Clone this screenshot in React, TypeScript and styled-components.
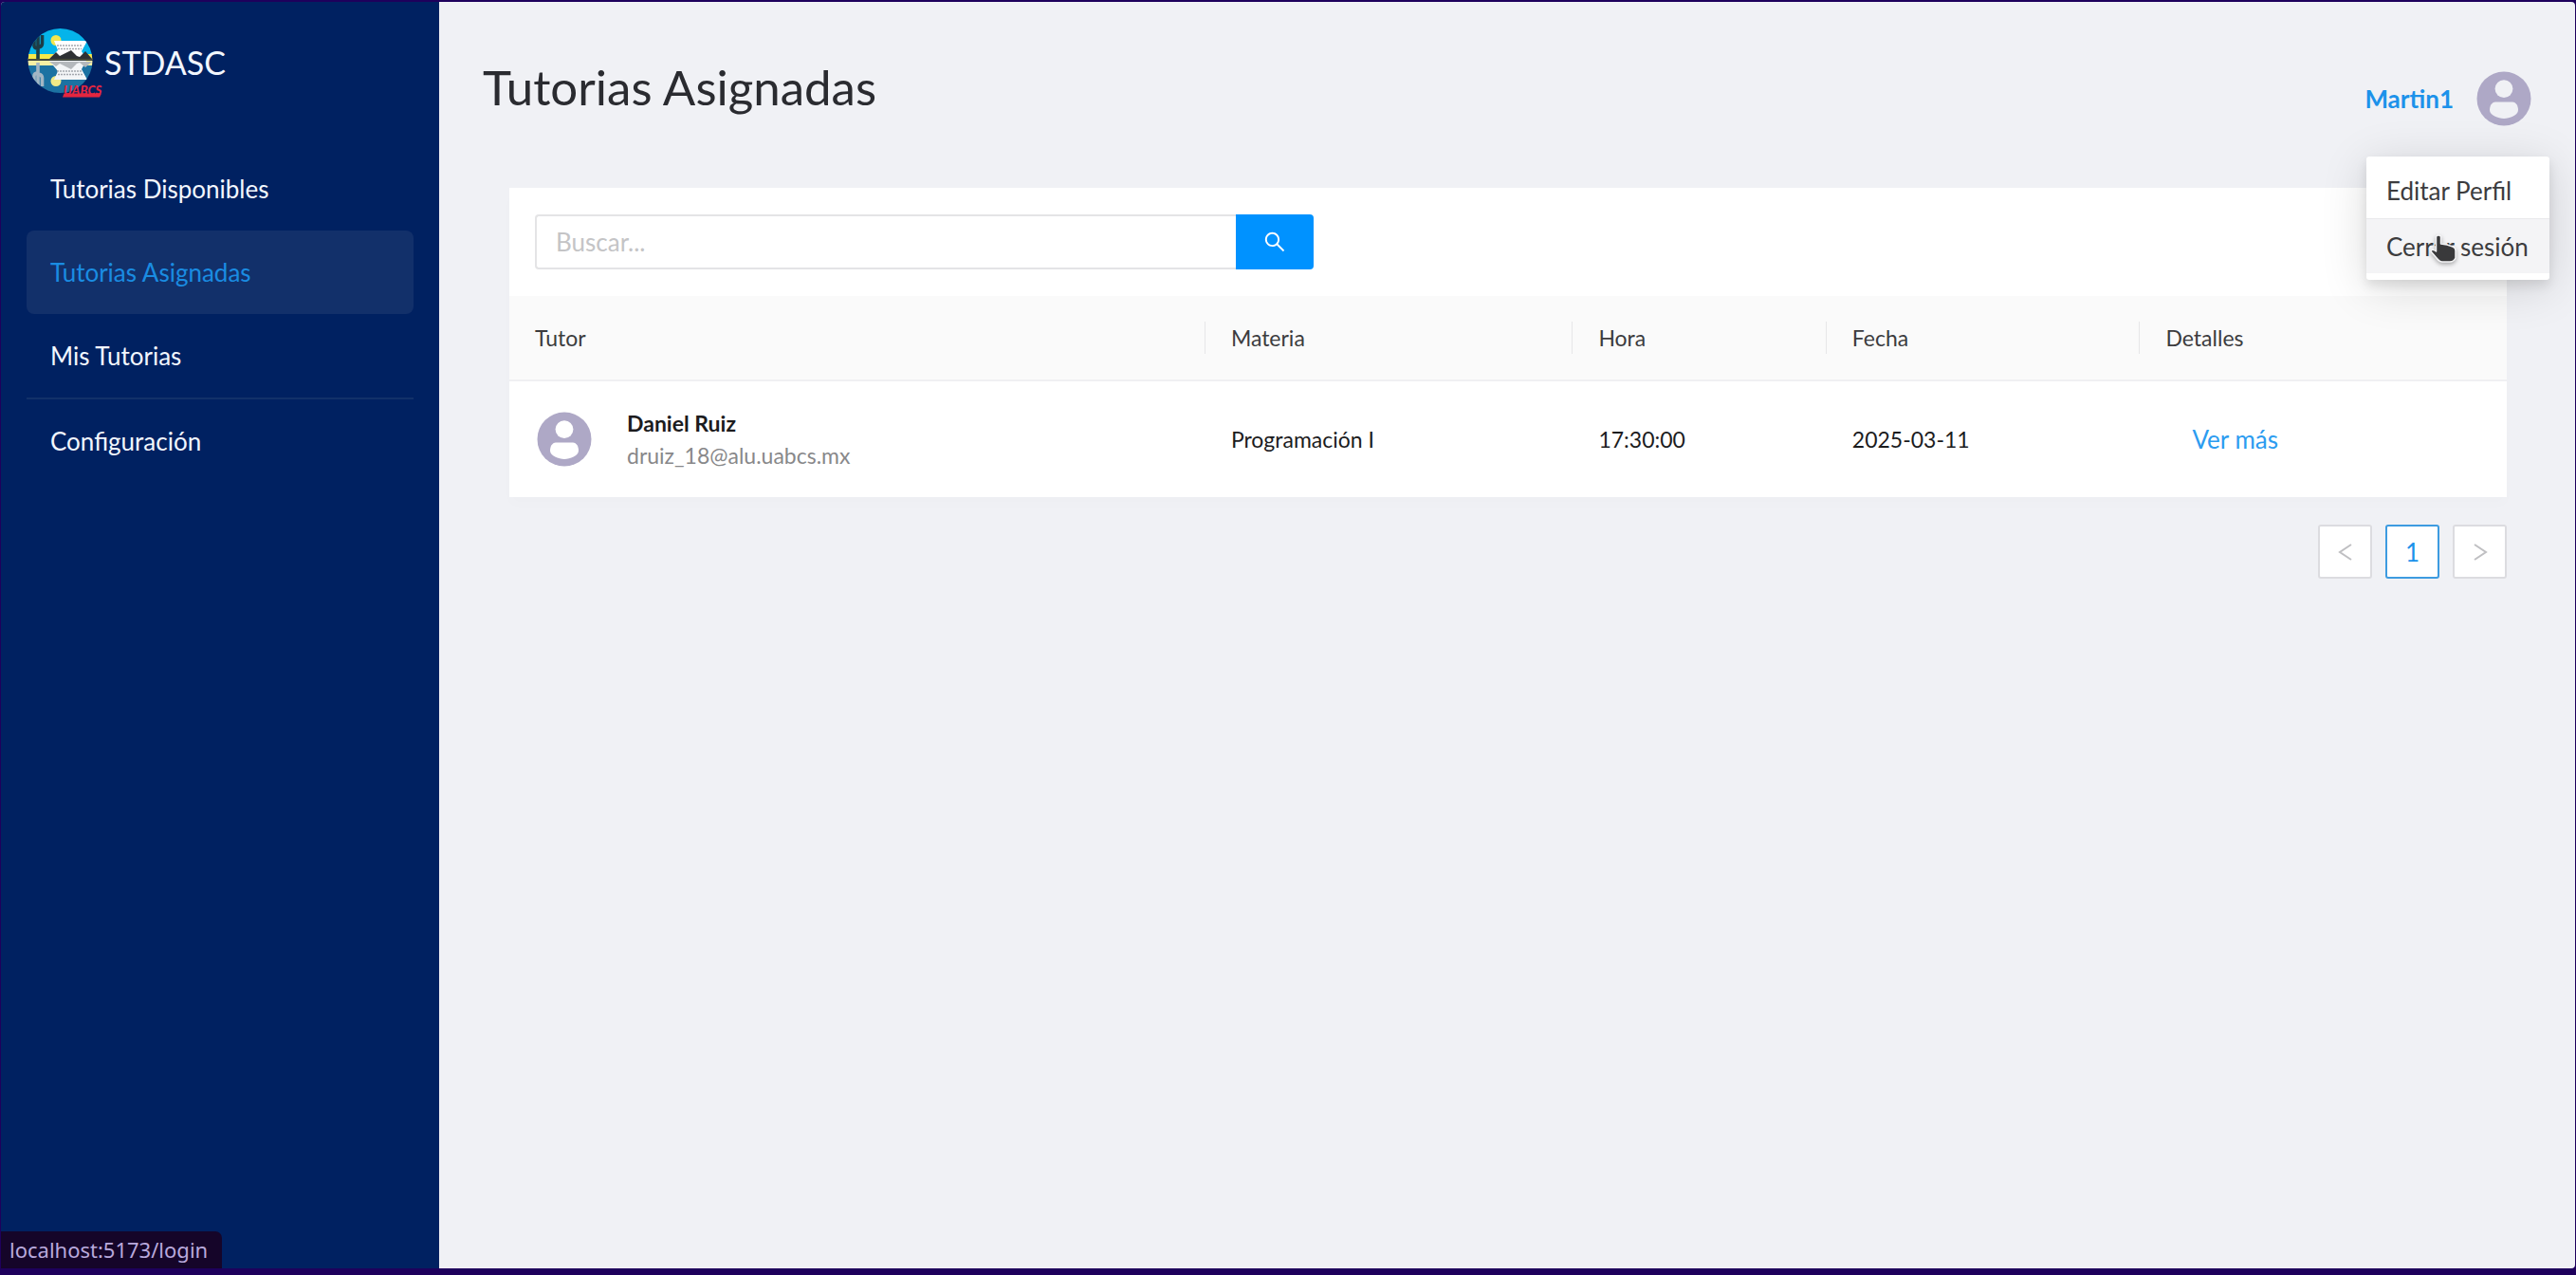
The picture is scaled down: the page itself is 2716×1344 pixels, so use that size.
import React from "react";
import styled, { createGlobalStyle } from "styled-components";
import { AiOutlineSearch } from "react-icons/ai";

const color = {
  frame: "#1e005c",
  navy: "#002161",
  blue: "#0092ff",
  link: "#1c92ea",
  page: "#f0f1f5",
  avatar: "#aea8c6",
  text: "#1c1c1e",
  soft: "#3c3c3e",
};

const GlobalStyle = createGlobalStyle`
  *, *::before, *::after { box-sizing: border-box; }
  body {
    margin: 0;
    background: ${color.frame};
    color: ${color.text};
    font-family: Lato, "Open Sans", sans-serif;
    font-size: 26px;
    line-height: 34px;
  }
  a { color: inherit; text-decoration: none; }
  button, input { font: inherit; }
`;

const Frame = styled.div`
  min-height: 100vh;
  padding: 2px 1px 7px;
  background: ${color.frame};
  display: grid;
`;

const Shell = styled.div`
  display: grid;
  grid-template-columns: 462px minmax(0, 1fr);
  border-radius: 4px;
  overflow: hidden;
  background: ${color.page};
`;

const Sidebar = styled.aside`
  padding: 26px 27px;
  background: ${color.navy};
  color: #f2f7ff;
`;

const Brand = styled.a`
  display: flex;
  align-items: center;
  margin-bottom: 51px;
  font-size: 34px;
  line-height: 40px;
`;

const Menu = styled.ul`
  margin: 0;
  padding: 0;
  list-style: none;
`;

const MenuItem = styled.li<{ $divided?: boolean }>`
  border-top: ${(p) => (p.$divided ? "2px solid #123169" : "0")};
`;

const MenuLink = styled.a<{ $active?: boolean }>`
  display: flex;
  align-items: center;
  height: 88px;
  padding: 0 25px;
  border-radius: 8px;
  background: ${(p) => (p.$active ? "#12306a" : "transparent")};
  color: ${(p) => (p.$active ? "#1a8ce2" : "inherit")};
`;

const Main = styled.main`
  min-width: 0;
`;

const Header = styled.header`
  display: flex;
  justify-content: space-between;
  align-items: flex-start;
  padding: 60px 45px 0 46px;
  margin-bottom: 52px;
`;

const Title = styled.h1`
  margin: 0;
  font-size: 51px;
  line-height: 60px;
  font-weight: 400;
  color: #2a2b30;
`;

const User = styled.div`
  position: relative;
`;

const UserButton = styled.button`
  display: flex;
  align-items: center;
  gap: 23px;
  height: 84px;
  padding: 0;
  border: 0;
  background: none;
  color: ${color.link};
  font-weight: 700;
  cursor: pointer;
`;

const Dropdown = styled.div`
  position: absolute;
  top: calc(100% + 19px);
  right: -18px;
  z-index: 2;
  width: 193px;
  padding: 7px 0;
  border-radius: 3px;
  background: #fff;
  box-shadow: 0 6px 12px rgba(0, 0, 0, 0.1), 0 8px 50px rgba(0, 0, 0, 0.14);
`;

const DropdownItem = styled.a<{ $hover?: boolean }>`
  position: relative;
  display: flex;
  align-items: center;
  height: 58px;
  padding: 0 21px;
  white-space: nowrap;
  color: ${color.soft};
  background: ${(p) => (p.$hover ? "#f4f4f6" : "transparent")};
  border-top: ${(p) => (p.$hover ? "1px solid #e9e9ec" : "0")};
`;

const Pointer = styled.svg`
  position: absolute;
  left: 65px;
  top: 14px;
  filter: drop-shadow(0 2px 2px rgba(0, 0, 0, 0.3));
`;

const Content = styled.section`
  margin: 0 72px 0 74px;
`;

const Card = styled.div`
  background: #fff;
  box-shadow: 0 8px 12px rgba(0, 0, 0, 0.01);
`;

const Toolbar = styled.div`
  padding: 28px 27px;
`;

const SearchBar = styled.form`
  display: flex;
  width: 40%;
  min-width: 420px;
`;

const SearchInput = styled.input`
  flex: 1;
  min-width: 0;
  height: 58px;
  padding: 0 20px;
  border: 2px solid #e4e4e6;
  border-right: 0;
  border-radius: 4px 0 0 4px;
  background: #fff;
  outline: 0;
  &::placeholder { color: #c4c4c6; opacity: 1; }
`;

const SearchButton = styled.button`
  display: grid;
  place-items: center;
  width: 82px;
  height: 58px;
  padding: 0;
  border: 0;
  border-radius: 0 4px 4px 0;
  background: ${color.blue};
  color: #fff;
`;

const Table = styled.table`
  width: 100%;
  table-layout: fixed;
  border-collapse: separate;
  border-spacing: 0;
  font-size: 23px;
`;

const Column = styled.col<{ $share: number }>`
  width: ${(p) => p.$share}%;
`;

const HeadCell = styled.th`
  height: 90px;
  padding: 0;
  background: #fafafa;
  border-bottom: 2px solid #f0f0f2;
  text-align: left;
  font-weight: 400;
  color: ${color.soft};
`;

const HeadLabel = styled.div<{ $ruled?: boolean }>`
  padding-left: 27px;
  border-left: ${(p) => (p.$ruled ? "1px solid #e6e6e8" : "0")};
`;

const Cell = styled.td`
  height: 122px;
  padding: 0 28px;
`;

const Person = styled.div`
  display: flex;
  align-items: center;
  gap: 36px;
`;

const PersonName = styled.strong`
  display: block;
  font-weight: 700;
`;

const PersonMail = styled.span`
  display: block;
  color: #88888a;
`;

const MoreLink = styled.a`
  padding-left: 28px;
  font-size: 26px;
  color: #2c9cf0;
`;

const Pagination = styled.nav`
  display: flex;
  justify-content: flex-end;
  gap: 14px;
  margin-top: 29px;
`;

const PageButton = styled.button<{ $current?: boolean }>`
  display: grid;
  place-items: center;
  width: 57px;
  height: 57px;
  padding: 0;
  border: 2px solid ${(p) => (p.$current ? "#3d9be0" : "#dcdce0")};
  border-radius: 3px;
  background: #fff;
  color: ${(p) => (p.$current ? color.link : "#bfbfc2")};
`;

const StatusBar = styled.div`
  position: fixed;
  left: 1px;
  bottom: 7px;
  height: 39px;
  padding: 0 15px 0 9px;
  border-top-right-radius: 7px;
  background: #150529;
  color: #b9a9dc;
  font: 22px/38px "Noto Sans", sans-serif;
`;

const Avatar = ({ hole }: { hole: string }) => (
  <svg width="60" height="60" viewBox="0 0 60 60" aria-hidden="true">
    <circle cx="30" cy="30" r="28.5" fill={color.avatar} />
    <circle cx="30" cy="19.6" r="9.4" fill={hole} />
    <path
      d="M21 33.5H39C43 33.5 45 38 45 42C45 47.500 36 51 30 51C24 51 15 47.500 15 42C15 38 17 33.500 21 33.500Z"
      fill={hole}
    />
  </svg>
);

const LogoMark = styled.svg`
  flex: none;
  overflow: visible;
`;

const Logo = () => (
  <LogoMark width="82" height="76" viewBox="28 28 82 76" role="img" aria-label="UABCS">
    <defs>
      <clipPath id="disc"><circle cx="63.500" cy="64" r="34" /></clipPath>
    </defs>
    <g clipPath="url(#disc)">
      <rect x="28" y="28" width="72" height="30" fill="#05b4ea" />
      <rect x="28" y="57" width="72" height="6" fill="#f7e94b" />
      <rect x="28" y="64" width="72" height="5" fill="#f6f0a4" />
      <rect x="28" y="69" width="72" height="30" fill="#1c72a2" />
      <path d="M40 32v30M36 38v10q0 3 4 3M44.500 37v9q0 3-4 4" stroke="#1d3c46" strokeWidth="3.600" fill="none" />
      <path d="M40 66v30M36 90v-10q0-3 4-3M44.500 91v-9q0-3-4-4" stroke="#a3b6c4" strokeWidth="3.600" fill="none" />
      <circle cx="59" cy="42.500" r="5.500" fill="#f3e64e" />
      <circle cx="59" cy="85.500" r="5.500" fill="#f1ea86" />
      <path d="M57 43H92L86 54L91 62H52L61 53Z" fill="#fff" />
      <path d="M52 64H91L86 73L92 84H57L61 75Z" fill="#f3f5f7" />
      <path d="M60 48H87M61 51.500H86M60 75H86M61 78.500H88" stroke="#a4a8ae" strokeWidth="1.600" strokeDasharray="2 1" />
      <path d="M52 62L59 55L63 59L75 53L81 59L84 60L90 54L97 62Z" fill="#2e3134" />
      <path d="M52 65L59 70L63 67L75 73L81 67L84 66L90 71L97 65Z" fill="#b4b8bc" />
      <rect x="28" y="62" width="72" height="1.800" fill="#4c4f3a" />
    </g>
    <path d="M67.500 98.500H107L105 102.500H66Z" fill="#e5263f" />
    <text
      x="67"
      y="100"
      fontFamily="Lato, sans-serif"
      fontSize="13"
      fontWeight="900"
      fontStyle="italic"
      fill="#e5263f"
    >
      UABCS
    </text>
  </LogoMark>
);

const Chevron = ({ flip }: { flip?: boolean }) => (
  <svg width="20" height="20" viewBox="0 0 20 20" aria-hidden="true">
    <path
      d={flip ? "M4 2L16 10L4 18" : "M16 2L4 10L16 18"}
      fill="none"
      stroke="currentColor"
      strokeWidth="2"
    />
  </svg>
);

const HandPointer = () => (
  <Pointer width="34" height="36" viewBox="0 0 34 36" aria-hidden="true">
    <path
      d="M8.500 5Q8.500 3 11 3Q13.500 3 13.500 5V12L20 13L26 15Q29 16 29 19V27Q27 31 23 31H15Q12 31 9 27L3 20Q4 17 7 19L8.500 20Z"
      fill="#39393b"
      stroke="#f4f4f6"
      strokeWidth="1.500"
      strokeLinejoin="round"
    />
  </Pointer>
);

const menu = [
  { label: "Tutorias Disponibles" },
  { label: "Tutorias Asignadas", active: true },
  { label: "Mis Tutorias" },
  { label: "Configuración", divided: true },
];

const columns = [
  { title: "Tutor", share: 34.8 },
  { title: "Materia", share: 18.4 },
  { title: "Hora", share: 12.7 },
  { title: "Fecha", share: 15.7 },
  { title: "Detalles", share: 18.4 },
];

const sessions = [
  {
    name: "Daniel Ruiz",
    mail: "druiz_18@alu.uabcs.mx",
    subject: "Programación I",
    time: "17:30:00",
    date: "2025-03-11",
  },
];

export default function App() {
  return (
    <>
      <GlobalStyle />
      <Frame>
        <Shell>
          <Sidebar>
            <Brand href="#inicio">
              <Logo />
              STDASC
            </Brand>
            <nav aria-label="Principal">
              <Menu>
                {menu.map((item) => (
                  <MenuItem key={item.label} $divided={item.divided}>
                    <MenuLink href="#menu" $active={item.active} aria-current={item.active ? "page" : undefined}>
                      {item.label}
                    </MenuLink>
                  </MenuItem>
                ))}
              </Menu>
            </nav>
          </Sidebar>
          <Main>
            <Header>
              <Title>Tutorias Asignadas</Title>
              <User>
                <UserButton type="button" aria-haspopup="true" aria-expanded="true">
                  Martin1
                  <Avatar hole={color.page} />
                </UserButton>
                <Dropdown>
                  <DropdownItem href="#perfil">Editar Perfil</DropdownItem>
                  <DropdownItem href="#login" $hover>
                    Cerrar sesión
                    <HandPointer />
                  </DropdownItem>
                </Dropdown>
              </User>
            </Header>
            <Content>
              <Card>
                <Toolbar>
                  <SearchBar role="search" onSubmit={(e) => e.preventDefault()}>
                    <SearchInput type="text" placeholder="Buscar..." aria-label="Buscar" />
                    <SearchButton type="submit" aria-label="Buscar">
                      <AiOutlineSearch size={26} />
                    </SearchButton>
                  </SearchBar>
                </Toolbar>
                <Table>
                  <colgroup>
                    {columns.map((c) => (
                      <Column key={c.title} $share={c.share} />
                    ))}
                  </colgroup>
                  <thead>
                    <tr>
                      {columns.map((c, i) => (
                        <HeadCell key={c.title} scope="col">
                          <HeadLabel $ruled={i > 0}>{c.title}</HeadLabel>
                        </HeadCell>
                      ))}
                    </tr>
                  </thead>
                  <tbody>
                    {sessions.map((s) => (
                      <tr key={s.mail}>
                        <Cell>
                          <Person>
                            <Avatar hole="#fff" />
                            <div>
                              <PersonName>{s.name}</PersonName>
                              <PersonMail>{s.mail}</PersonMail>
                            </div>
                          </Person>
                        </Cell>
                        <Cell>{s.subject}</Cell>
                        <Cell>{s.time}</Cell>
                        <Cell>{s.date}</Cell>
                        <Cell>
                          <MoreLink href="#detalles">Ver más</MoreLink>
                        </Cell>
                      </tr>
                    ))}
                  </tbody>
                </Table>
              </Card>
              <Pagination aria-label="Paginación">
                <PageButton type="button" aria-label="Anterior">
                  <Chevron />
                </PageButton>
                <PageButton type="button" $current aria-current="page">
                  1
                </PageButton>
                <PageButton type="button" aria-label="Siguiente">
                  <Chevron flip />
                </PageButton>
              </Pagination>
            </Content>
          </Main>
        </Shell>
      </Frame>
      <StatusBar>localhost:5173/login</StatusBar>
    </>
  );
}
